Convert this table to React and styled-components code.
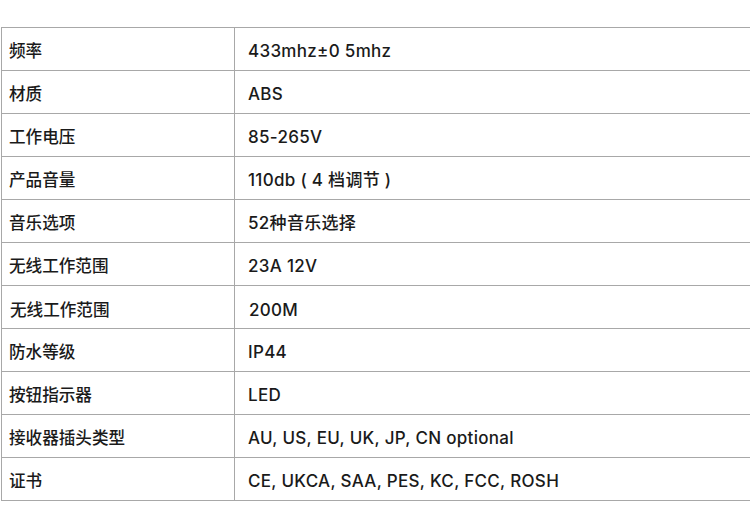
import React from "react";
import styled, { createGlobalStyle, css } from "styled-components";

const GlobalStyle = createGlobalStyle`
  html, body {
    margin: 0;
    padding: 0;
    background: #fff;
    overflow: hidden;
  }
  body {
    font-family: Inter, "Noto Sans CJK SC", sans-serif;
    color: #1a1a1a;
  }
`;

const Page = styled.div`
  width: 750px;
  height: 524px;
  padding-top: 27px;
  padding-left: 1px;
  box-sizing: border-box;
  overflow: hidden;
`;

const SpecTable = styled.table`
  width: 760px;
  border-collapse: collapse;
  table-layout: fixed;
`;

const Row = styled.tr`
  height: 43px;
`;

const Label = styled.td`
  width: 233px;
  box-sizing: border-box;
  border: 1px solid #a8a8a8;
  padding: 3px 0 0 7px;
  font-size: 16.6px;
  font-weight: 500;
  line-height: 20px;
  vertical-align: middle;
  ${props =>
    props.shifted &&
    css`
      padding: 6px 0 0 8px;
    `};
`;

const Value = styled.td`
  border: 1px solid #a8a8a8;
  padding: 3px 0 0 13px;
  font-size: 17px;
  font-weight: 500;
  letter-spacing: 0.3px;
  line-height: 20px;
  vertical-align: middle;
  ${props =>
    props.shifted &&
    css`
      padding: 6px 0 0 14px;
    `};
`;

const specs = [
  { label: "频率", value: "433mhz±0 5mhz" },
  { label: "材质", value: "ABS" },
  { label: "工作电压", value: "85-265V" },
  { label: "产品音量", value: "110db ( 4 档调节 )" },
  { label: "音乐选项", value: "52种音乐选择" },
  { label: "无线工作范围", value: "23A 12V" },
  { label: "无线工作范围", value: "200M", shifted: true },
  { label: "防水等级", value: "IP44" },
  { label: "按钮指示器", value: "LED" },
  { label: "接收器插头类型", value: "AU, US, EU, UK, JP, CN optional" },
  { label: "证书", value: "CE, UKCA, SAA, PES, KC, FCC, ROSH" },
];

export default function App() {
  return (
    <Page>
      <GlobalStyle />
      <SpecTable>
        <tbody>
          {specs.map((spec, index) => (
            <Row key={index}>
              <Label shifted={spec.shifted}>{spec.label}</Label>
              <Value shifted={spec.shifted}>{spec.value}</Value>
            </Row>
          ))}
        </tbody>
      </SpecTable>
    </Page>
  );
}
